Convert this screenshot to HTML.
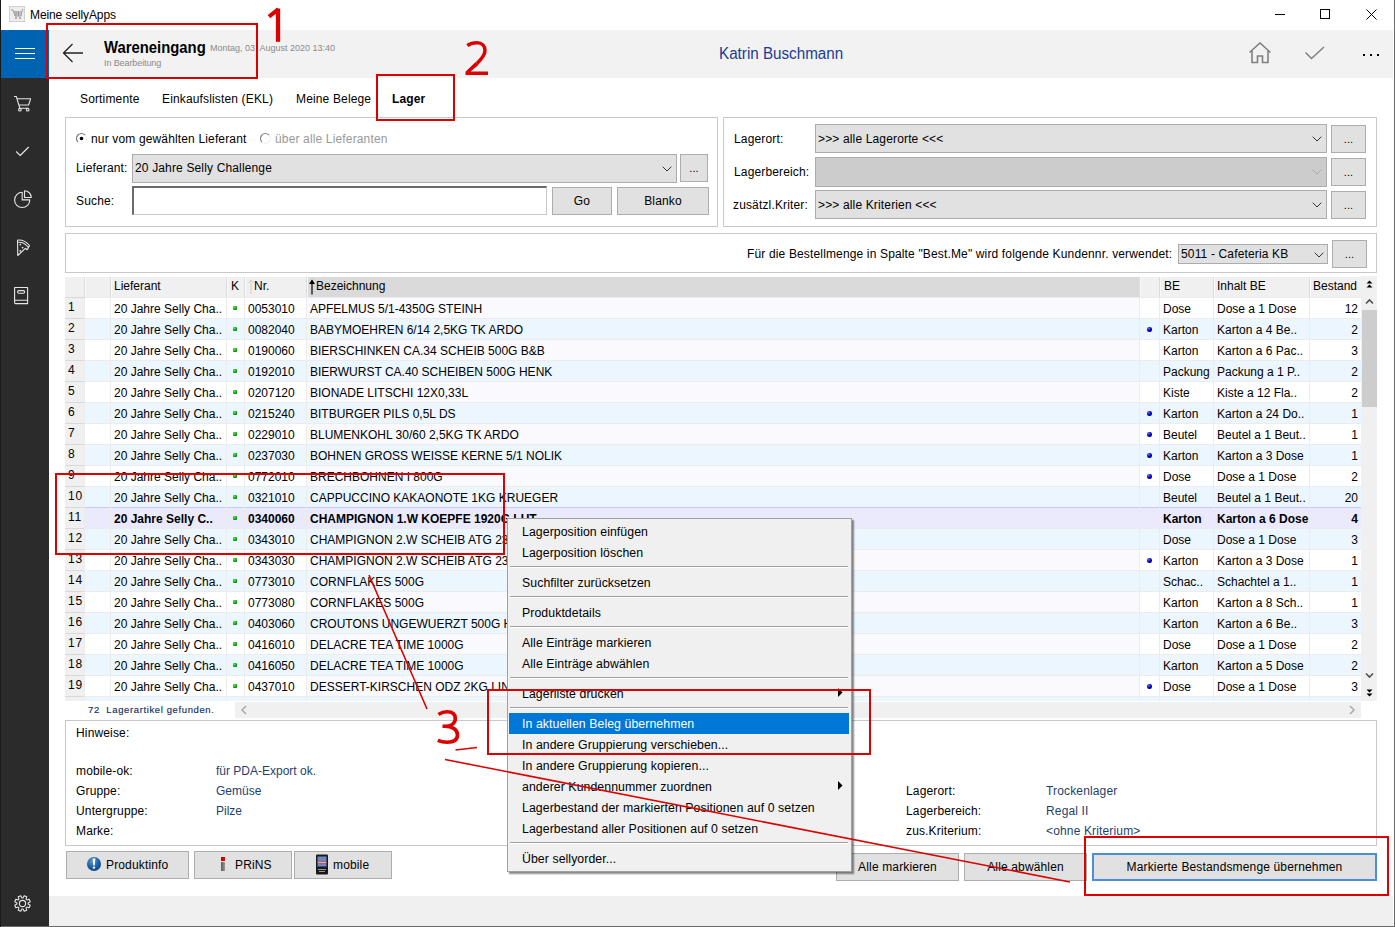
<!DOCTYPE html><html><head><meta charset="utf-8"><style>
*{box-sizing:border-box;margin:0;padding:0}
html,body{width:1395px;height:927px;overflow:hidden;background:#fff;font-family:"Liberation Sans",sans-serif;color:#000}
.ab{position:absolute}
.t{position:absolute;white-space:nowrap;font-size:12px;line-height:14px;letter-spacing:0.15px}
.g{letter-spacing:0}
.btn{position:absolute;background:#e1e1e1;border:1px solid #adadad}
.combo{position:absolute;background:#e1e1e1;border:1px solid #acacac}
.panel{position:absolute;border:1px solid #c8c8c8;background:#fff}
.sep{position:absolute;height:1px;background:#d7d7d7}

</style></head><body>
<div class="ab" style="left:9px;top:6px;width:16px;height:16px;background:#ededed;border:1px solid #d0d0d0"></div>
<svg class="ab" style="left:10px;top:8px" width="14" height="12" viewBox="0 0 14 12"><path d="M1 2 L3 2 L5 8 L11 8 L12 3 M4 4 L12 4 M5 6 L11 6 M6 3 L6 8 M8.5 3 L8.5 8 M12 3 L13 1" stroke="#999" stroke-width="1" fill="none"/><circle cx="6" cy="10" r="1" fill="#999"/><circle cx="10" cy="10" r="1" fill="#999"/></svg>
<div class="t" style="left:30px;top:8px;font-size:12px;color:#000;letter-spacing:-0.1px">Meine sellyApps</div>
<div class="ab" style="left:1275px;top:14px;width:10px;height:1px;background:#000"></div>
<div class="ab" style="left:1320px;top:9px;width:10px;height:10px;border:1px solid #000"></div>
<svg class="ab" style="left:1366px;top:9px" width="11" height="11" viewBox="0 0 11 11"><path d="M0.5 0.5 L10.5 10.5 M10.5 0.5 L0.5 10.5" stroke="#000" stroke-width="1"/></svg>
<div class="ab" style="left:1px;top:30px;width:48px;height:896px;background:#2b2b2b"></div>
<div class="ab" style="left:1px;top:30px;width:48px;height:48px;background:#0063b1"></div>
<div class="ab" style="left:15px;top:48px;width:20px;height:1px;background:#fff"></div>
<div class="ab" style="left:15px;top:53px;width:20px;height:1px;background:#fff"></div>
<div class="ab" style="left:15px;top:58px;width:20px;height:1px;background:#fff"></div>
<div class="ab" style="left:49px;top:30px;width:1344px;height:48px;background:#f2f2f2"></div>
<svg class="ab" style="left:62px;top:43px" width="23" height="20" viewBox="0 0 23 20"><path d="M1.5 10 L21 10 M10.5 1 L1.5 10 L10.5 19" stroke="#222" stroke-width="1.3" fill="none"/></svg>
<div class="t" style="left:104px;top:38px;font-size:16.5px;line-height:18px;font-weight:bold;letter-spacing:0;transform:scaleX(0.9);transform-origin:0 0">Wareneingang</div>
<div class="t" style="left:210px;top:43px;font-size:9px;line-height:11px;color:#8a8a8a;letter-spacing:0">Montag, 03. August 2020 13:40</div>
<div class="t" style="left:104px;top:58px;font-size:9px;line-height:11px;color:#8a8a8a;letter-spacing:-0.1px">In Bearbeitung</div>
<div class="t" style="left:719px;top:45px;font-size:16px;line-height:18px;color:#1a3b96;letter-spacing:0;transform:scaleX(0.95);transform-origin:0 0">Katrin Buschmann</div>
<svg class="ab" style="left:1248px;top:42px" width="24" height="22" viewBox="0 0 24 22"><path d="M1.5 10.5 L12 1 L22.5 10.5 M4 8.5 L4 20.5 L9.5 20.5 L9.5 14 L14.5 14 L14.5 20.5 L20 20.5 L20 8.5" stroke="#808080" stroke-width="1.6" fill="none"/></svg>
<svg class="ab" style="left:1305px;top:46px" width="20" height="14" viewBox="0 0 20 14"><path d="M0.5 6.5 L6.5 12.5 L19 1" stroke="#808080" stroke-width="1.5" fill="none"/></svg>
<div class="ab" style="left:1363px;top:54px;width:2px;height:2px;background:#000"></div>
<div class="ab" style="left:1370px;top:54px;width:2px;height:2px;background:#000"></div>
<div class="ab" style="left:1377px;top:54px;width:2px;height:2px;background:#000"></div>
<svg class="ab" style="left:0;top:0" width="49" height="927" viewBox="0 0 49 927" fill="none" stroke="#e6e6e6" stroke-width="1.1" stroke-linejoin="round"><path d="M14 96.5 L16.3 96.5 L19.8 108.2 L28.3 108.2 M17.2 98.8 L30.6 98.8 L28.6 105 L19.2 105"/><circle cx="19.9" cy="109.7" r="1.3"/><circle cx="27.7" cy="109.7" r="1.3"/><path d="M16.2 151.5 L20.2 155.5 L28.7 147"/><path d="M22.2 192.3 A7.6 7.6 0 1 0 29.8 199.9 L22.2 199.9 Z"/><path d="M24.5 190.8 L24.5 197.5 L31.2 197.5 A6.7 6.7 0 0 0 24.5 190.8 Z"/><path d="M17.5 240 L17.8 255.5 L25.3 248.3 M17.5 240 Q24.5 239.3 29.5 245.5 L27.3 249.8 L25.3 248.3 M18.3 242.2 Q24.5 242 28.2 247.2"/><path d="M14.6 287.5 L27.6 287.5 L27.6 303.6 L15.6 303.6 Q14.6 303.6 14.6 302.6 Z M14.6 300.3 L27.6 300.3"/><rect x="17.6" y="290.6" width="7" height="2.6" rx="1.2"/><path d="M28.07 904.04 L30.21 905.21 L29.16 907.74 L26.82 907.06 L26.06 907.82 L26.74 910.16 L24.21 911.21 L23.04 909.07 L21.96 909.07 L20.79 911.21 L18.26 910.16 L18.94 907.82 L18.18 907.06 L15.84 907.74 L14.79 905.21 L16.93 904.04 L16.93 902.96 L14.79 901.79 L15.84 899.26 L18.18 899.94 L18.94 899.18 L18.26 896.84 L20.79 895.79 L21.96 897.93 L23.04 897.93 L24.21 895.79 L26.74 896.84 L26.06 899.18 L26.82 899.94 L29.16 899.26 L30.21 901.79 L28.07 902.96 Z"/><circle cx="22.5" cy="903.5" r="3.1"/></svg>
<svg class="ab" style="left:0;top:0" width="49" height="927" viewBox="0 0 49 927" fill="#e6e6e6"><circle cx="20.3" cy="244.6" r="0.9"/><circle cx="22.6" cy="247.6" r="0.9"/><circle cx="20.3" cy="250.8" r="0.9"/></svg>
<div class="t" style="left:80px;top:92px">Sortimente</div>
<div class="t" style="left:162px;top:92px">Einkaufslisten (EKL)</div>
<div class="t" style="left:296px;top:92px">Meine Belege</div>
<div class="t" style="left:392px;top:92px;font-weight:bold">Lager</div>
<div class="panel" style="left:65px;top:117px;width:653px;height:110px"></div>
<svg class="ab" style="left:75px;top:132px" width="13" height="13" viewBox="0 0 13 13"><circle cx="6.5" cy="6.5" r="5" fill="#fff"/><path d="M2.96 10.04 A5 5 0 0 1 10.04 2.96" stroke="#7a7a7a" stroke-width="1.2" fill="none"/><path d="M10.04 2.96 A5 5 0 0 1 2.96 10.04" stroke="#f4f4f4" stroke-width="1.2" fill="none"/><circle cx="6.5" cy="6.5" r="1.8" fill="#000"/></svg>
<div class="t" style="left:91px;top:132px">nur vom gewählten Lieferant</div>
<svg class="ab" style="left:259px;top:132px" width="13" height="13" viewBox="0 0 13 13"><circle cx="6.5" cy="6.5" r="5" fill="#fff"/><path d="M2.96 10.04 A5 5 0 0 1 10.04 2.96" stroke="#8a8a8a" stroke-width="1.2" fill="none"/><path d="M10.04 2.96 A5 5 0 0 1 2.96 10.04" stroke="#f0f0f0" stroke-width="1.2" fill="none"/></svg>
<div class="t" style="left:275px;top:132px;color:#999">über alle Lieferanten</div>
<div class="t" style="left:76px;top:161px">Lieferant:</div>
<div class="combo" style="left:132px;top:154px;width:545px;height:29px"></div>
<div class="t" style="left:135px;top:161px">20 Jahre Selly Challenge</div>
<svg class="ab" style="left:662px;top:166px" width="10" height="6" viewBox="0 0 10 6"><path d="M0.7 0.7 L5 5 L9.3 0.7" stroke="#333" stroke-width="1" fill="none"/></svg>
<div class="btn" style="left:680px;top:154px;width:28px;height:28px"></div>
<div class="t" style="left:680px;top:161px;width:28px;text-align:center;font-size:11px">...</div>
<div class="t" style="left:76px;top:194px">Suche:</div>
<div class="ab" style="left:132px;top:186px;width:415px;height:29px;background:#fff;border:1px solid #c8c8c8;border-top:2px solid #6a6a6a;border-left:2px solid #6a6a6a"></div>
<div class="btn" style="left:552px;top:187px;width:60px;height:28px"></div>
<div class="t" style="left:552px;top:194px;width:60px;text-align:center">Go</div>
<div class="btn" style="left:617px;top:187px;width:92px;height:28px"></div>
<div class="t" style="left:617px;top:194px;width:92px;text-align:center">Blanko</div>
<div class="panel" style="left:723px;top:117px;width:654px;height:110px"></div>
<div class="t" style="left:734px;top:132px">Lagerort:</div>
<div class="t" style="left:734px;top:165px">Lagerbereich:</div>
<div class="t" style="left:733px;top:198px">zusätzl.Kriter:</div>
<div class="combo" style="left:815px;top:124px;width:512px;height:29px"></div>
<div class="t" style="left:818px;top:132px">&gt;&gt;&gt; alle Lagerorte &lt;&lt;&lt;</div>
<svg class="ab" style="left:1312px;top:136px" width="10" height="6" viewBox="0 0 10 6"><path d="M0.7 0.7 L5 5 L9.3 0.7" stroke="#333" stroke-width="1" fill="none"/></svg>
<div class="combo" style="left:815px;top:157px;width:512px;height:30px;background:#cccccc"></div>
<svg class="ab" style="left:1312px;top:169px" width="10" height="6" viewBox="0 0 10 6"><path d="M0.7 0.7 L5 5 L9.3 0.7" stroke="#aaa" stroke-width="1" fill="none"/></svg>
<div class="combo" style="left:815px;top:190px;width:512px;height:29px"></div>
<div class="t" style="left:818px;top:198px">&gt;&gt;&gt; alle Kriterien &lt;&lt;&lt;</div>
<svg class="ab" style="left:1312px;top:202px" width="10" height="6" viewBox="0 0 10 6"><path d="M0.7 0.7 L5 5 L9.3 0.7" stroke="#333" stroke-width="1" fill="none"/></svg>
<div class="btn" style="left:1331px;top:125px;width:35px;height:28px"></div>
<div class="t" style="left:1331px;top:132px;width:35px;text-align:center;font-size:11px">...</div>
<div class="btn" style="left:1331px;top:158px;width:35px;height:28px"></div>
<div class="t" style="left:1331px;top:165px;width:35px;text-align:center;font-size:11px">...</div>
<div class="btn" style="left:1331px;top:191px;width:35px;height:28px"></div>
<div class="t" style="left:1331px;top:198px;width:35px;text-align:center;font-size:11px">...</div>
<div class="panel" style="left:65px;top:233px;width:1312px;height:40px"></div>
<div class="t" style="left:747px;top:247px">Für die Bestellmenge in Spalte "Best.Me" wird folgende Kundennr. verwendet:</div>
<div class="combo" style="left:1178px;top:244px;width:150px;height:20px"></div>
<div class="t" style="left:1181px;top:247px">5011 - Cafeteria KB</div>
<svg class="ab" style="left:1314px;top:252px" width="10" height="6" viewBox="0 0 10 6"><path d="M0.7 0.7 L5 5 L9.3 0.7" stroke="#333" stroke-width="1" fill="none"/></svg>
<div class="btn" style="left:1332px;top:240px;width:35px;height:28px"></div>
<div class="t" style="left:1332px;top:247px;width:35px;text-align:center;font-size:11px">...</div>
<div class="ab" style="left:65px;top:276px;width:1312px;height:425px;overflow:hidden">
<div class="ab" style="left:0;top:1px;width:1296px;height:20px;background:#f0f0f0"></div>
<div class="ab" style="left:242px;top:1px;width:833px;height:20px;background:#dadada"></div>
<div class="ab" style="left:19px;top:1px;width:1px;height:20px;background:#dcdcdc"></div>
<div class="ab" style="left:20px;top:1px;width:1px;height:20px;background:#fafafa"></div>
<div class="ab" style="left:45px;top:1px;width:1px;height:20px;background:#dcdcdc"></div>
<div class="ab" style="left:46px;top:1px;width:1px;height:20px;background:#fafafa"></div>
<div class="ab" style="left:161px;top:1px;width:1px;height:20px;background:#dcdcdc"></div>
<div class="ab" style="left:162px;top:1px;width:1px;height:20px;background:#fafafa"></div>
<div class="ab" style="left:179px;top:1px;width:1px;height:20px;background:#dcdcdc"></div>
<div class="ab" style="left:180px;top:1px;width:1px;height:20px;background:#fafafa"></div>
<div class="ab" style="left:241px;top:1px;width:1px;height:20px;background:#dcdcdc"></div>
<div class="ab" style="left:242px;top:1px;width:1px;height:20px;background:#fafafa"></div>
<div class="ab" style="left:1074px;top:1px;width:1px;height:20px;background:#dcdcdc"></div>
<div class="ab" style="left:1075px;top:1px;width:1px;height:20px;background:#fafafa"></div>
<div class="ab" style="left:1094px;top:1px;width:1px;height:20px;background:#dcdcdc"></div>
<div class="ab" style="left:1095px;top:1px;width:1px;height:20px;background:#fafafa"></div>
<div class="ab" style="left:1148px;top:1px;width:1px;height:20px;background:#dcdcdc"></div>
<div class="ab" style="left:1149px;top:1px;width:1px;height:20px;background:#fafafa"></div>
<div class="ab" style="left:1244px;top:1px;width:1px;height:20px;background:#dcdcdc"></div>
<div class="ab" style="left:1245px;top:1px;width:1px;height:20px;background:#fafafa"></div>
<div class="ab" style="left:0;top:21px;width:1296px;height:1px;background:#dcdcdc"></div>
<div class="t g" style="left:49px;top:1px;line-height:19px;">Lieferant</div>
<div class="t g" style="left:166px;top:1px;line-height:19px;">K</div>
<div class="t g" style="left:189px;top:1px;line-height:19px;">Nr.</div>
<div class="t g" style="left:251px;top:1px;line-height:19px;">Bezeichnung</div>
<div class="t g" style="left:1099px;top:1px;line-height:19px;">BE</div>
<div class="t g" style="left:1152px;top:1px;line-height:19px;">Inhalt BE</div>
<div class="t g" style="left:1248px;top:1px;line-height:19px;">Bestand</div>
<svg class="ab" style="left:183px;top:3px" width="6" height="16" viewBox="0 0 6 16"><path d="M3 1 L3 15 M0.5 4 L3 1 L5.5 4" stroke="#d0d0d0" stroke-width="1" fill="none"/></svg>
<svg class="ab" style="left:244px;top:3px" width="6" height="16" viewBox="0 0 6 16"><path d="M3 1.5 L3 15.5" stroke="#000" stroke-width="1.2"/><path d="M0 5 L3 0.5 L6 5 Z" fill="#000"/></svg>
<div class="ab" style="left:1296px;top:0;width:16px;height:425px;background:#f0f0f0"></div>
<div class="ab" style="left:1297px;top:34px;width:15px;height:97px;background:#cdcdcd"></div>
<svg class="ab" style="left:1301px;top:4px" width="7" height="8" viewBox="0 0 7 8"><path d="M0.5 3.5 L3.5 0.5 L6.5 3.5 Z M0.5 7.5 L3.5 4.5 L6.5 7.5 Z" fill="#000"/></svg>
<svg class="ab" style="left:1300px;top:22px" width="9" height="7" viewBox="0 0 9 7"><path d="M1 5.5 L4.5 2 L8 5.5" stroke="#505050" stroke-width="1.6" fill="none"/></svg>
<svg class="ab" style="left:1300px;top:396px" width="9" height="7" viewBox="0 0 9 7"><path d="M1 1.5 L4.5 5 L8 1.5" stroke="#505050" stroke-width="1.6" fill="none"/></svg>
<svg class="ab" style="left:1301px;top:413px" width="7" height="8" viewBox="0 0 7 8"><path d="M0.5 0.5 L3.5 3.5 L6.5 0.5 Z M0.5 4.5 L3.5 7.5 L6.5 4.5 Z" fill="#000"/></svg>
<div class="ab" style="left:0;top:21px;width:20px;height:21px;background:#f0f0f0;border-top:1px solid #d9d9d9"></div>
<div class="ab" style="left:20px;top:21px;width:1276px;height:21px;background:#ffffff;border-top:1px solid #ececec"></div>
<div class="ab" style="left:242px;top:22px;width:833px;height:20px;background:#f9f9fe"></div>
<div class="t g" style="left:3px;top:22px;line-height:19px;letter-spacing:0.8px">1</div>
<div class="t g" style="left:49px;top:23px;line-height:21px;">20 Jahre Selly Cha..</div>
<div class="ab" style="left:168px;top:30px;width:4px;height:4px;background:radial-gradient(circle at 35% 30%,#50f050,#10b010 50%,#005a00);border-radius:1px"></div>
<div class="t g" style="left:183px;top:23px;line-height:21px;">0053010</div>
<div class="t g" style="left:245px;top:23px;line-height:21px;">APFELMUS 5/1-4350G STEINH</div>
<div class="t g" style="left:1098px;top:23px;line-height:21px;">Dose</div>
<div class="t g" style="left:1152px;top:23px;line-height:21px;">Dose a 1 Dose</div>
<div class="t g" style="left:1245px;top:23px;width:48px;text-align:right;line-height:21px;">12</div>
<div class="ab" style="left:0;top:42px;width:20px;height:21px;background:#f0f0f0;border-top:1px solid #d9d9d9"></div>
<div class="ab" style="left:20px;top:42px;width:1276px;height:21px;background:#ecf6fe;border-top:1px solid #ececec"></div>
<div class="ab" style="left:242px;top:43px;width:833px;height:20px;background:#ecf6fe"></div>
<div class="t g" style="left:3px;top:43px;line-height:19px;letter-spacing:0.8px">2</div>
<div class="t g" style="left:49px;top:44px;line-height:21px;">20 Jahre Selly Cha..</div>
<div class="ab" style="left:168px;top:51px;width:4px;height:4px;background:radial-gradient(circle at 35% 30%,#50f050,#10b010 50%,#005a00);border-radius:1px"></div>
<div class="t g" style="left:183px;top:44px;line-height:21px;">0082040</div>
<div class="t g" style="left:245px;top:44px;line-height:21px;">BABYMOEHREN 6/14 2,5KG TK ARDO</div>
<div class="ab" style="left:1082px;top:51px;width:5px;height:5px;background:radial-gradient(circle at 35% 30%,#7070f0,#0000c8 45%,#000060);border-radius:45%"></div>
<div class="t g" style="left:1098px;top:44px;line-height:21px;">Karton</div>
<div class="t g" style="left:1152px;top:44px;line-height:21px;">Karton a 4 Be..</div>
<div class="t g" style="left:1245px;top:44px;width:48px;text-align:right;line-height:21px;">2</div>
<div class="ab" style="left:0;top:63px;width:20px;height:21px;background:#f0f0f0;border-top:1px solid #d9d9d9"></div>
<div class="ab" style="left:20px;top:63px;width:1276px;height:21px;background:#ffffff;border-top:1px solid #ececec"></div>
<div class="ab" style="left:242px;top:64px;width:833px;height:20px;background:#f9f9fe"></div>
<div class="t g" style="left:3px;top:64px;line-height:19px;letter-spacing:0.8px">3</div>
<div class="t g" style="left:49px;top:65px;line-height:21px;">20 Jahre Selly Cha..</div>
<div class="ab" style="left:168px;top:72px;width:4px;height:4px;background:radial-gradient(circle at 35% 30%,#50f050,#10b010 50%,#005a00);border-radius:1px"></div>
<div class="t g" style="left:183px;top:65px;line-height:21px;">0190060</div>
<div class="t g" style="left:245px;top:65px;line-height:21px;">BIERSCHINKEN CA.34 SCHEIB 500G B&amp;B</div>
<div class="t g" style="left:1098px;top:65px;line-height:21px;">Karton</div>
<div class="t g" style="left:1152px;top:65px;line-height:21px;">Karton a 6 Pac..</div>
<div class="t g" style="left:1245px;top:65px;width:48px;text-align:right;line-height:21px;">3</div>
<div class="ab" style="left:0;top:84px;width:20px;height:21px;background:#f0f0f0;border-top:1px solid #d9d9d9"></div>
<div class="ab" style="left:20px;top:84px;width:1276px;height:21px;background:#ecf6fe;border-top:1px solid #ececec"></div>
<div class="ab" style="left:242px;top:85px;width:833px;height:20px;background:#ecf6fe"></div>
<div class="t g" style="left:3px;top:85px;line-height:19px;letter-spacing:0.8px">4</div>
<div class="t g" style="left:49px;top:86px;line-height:21px;">20 Jahre Selly Cha..</div>
<div class="ab" style="left:168px;top:93px;width:4px;height:4px;background:radial-gradient(circle at 35% 30%,#50f050,#10b010 50%,#005a00);border-radius:1px"></div>
<div class="t g" style="left:183px;top:86px;line-height:21px;">0192010</div>
<div class="t g" style="left:245px;top:86px;line-height:21px;">BIERWURST CA.40 SCHEIBEN 500G HENK</div>
<div class="t g" style="left:1098px;top:86px;line-height:21px;">Packung</div>
<div class="t g" style="left:1152px;top:86px;line-height:21px;">Packung a 1 P..</div>
<div class="t g" style="left:1245px;top:86px;width:48px;text-align:right;line-height:21px;">2</div>
<div class="ab" style="left:0;top:105px;width:20px;height:21px;background:#f0f0f0;border-top:1px solid #d9d9d9"></div>
<div class="ab" style="left:20px;top:105px;width:1276px;height:21px;background:#ffffff;border-top:1px solid #ececec"></div>
<div class="ab" style="left:242px;top:106px;width:833px;height:20px;background:#f9f9fe"></div>
<div class="t g" style="left:3px;top:106px;line-height:19px;letter-spacing:0.8px">5</div>
<div class="t g" style="left:49px;top:107px;line-height:21px;">20 Jahre Selly Cha..</div>
<div class="ab" style="left:168px;top:114px;width:4px;height:4px;background:radial-gradient(circle at 35% 30%,#50f050,#10b010 50%,#005a00);border-radius:1px"></div>
<div class="t g" style="left:183px;top:107px;line-height:21px;">0207120</div>
<div class="t g" style="left:245px;top:107px;line-height:21px;">BIONADE LITSCHI 12X0,33L</div>
<div class="t g" style="left:1098px;top:107px;line-height:21px;">Kiste</div>
<div class="t g" style="left:1152px;top:107px;line-height:21px;">Kiste a 12 Fla..</div>
<div class="t g" style="left:1245px;top:107px;width:48px;text-align:right;line-height:21px;">2</div>
<div class="ab" style="left:0;top:126px;width:20px;height:21px;background:#f0f0f0;border-top:1px solid #d9d9d9"></div>
<div class="ab" style="left:20px;top:126px;width:1276px;height:21px;background:#ecf6fe;border-top:1px solid #ececec"></div>
<div class="ab" style="left:242px;top:127px;width:833px;height:20px;background:#ecf6fe"></div>
<div class="t g" style="left:3px;top:127px;line-height:19px;letter-spacing:0.8px">6</div>
<div class="t g" style="left:49px;top:128px;line-height:21px;">20 Jahre Selly Cha..</div>
<div class="ab" style="left:168px;top:135px;width:4px;height:4px;background:radial-gradient(circle at 35% 30%,#50f050,#10b010 50%,#005a00);border-radius:1px"></div>
<div class="t g" style="left:183px;top:128px;line-height:21px;">0215240</div>
<div class="t g" style="left:245px;top:128px;line-height:21px;">BITBURGER PILS 0,5L DS</div>
<div class="ab" style="left:1082px;top:135px;width:5px;height:5px;background:radial-gradient(circle at 35% 30%,#7070f0,#0000c8 45%,#000060);border-radius:45%"></div>
<div class="t g" style="left:1098px;top:128px;line-height:21px;">Karton</div>
<div class="t g" style="left:1152px;top:128px;line-height:21px;">Karton a 24 Do..</div>
<div class="t g" style="left:1245px;top:128px;width:48px;text-align:right;line-height:21px;">1</div>
<div class="ab" style="left:0;top:147px;width:20px;height:21px;background:#f0f0f0;border-top:1px solid #d9d9d9"></div>
<div class="ab" style="left:20px;top:147px;width:1276px;height:21px;background:#ffffff;border-top:1px solid #ececec"></div>
<div class="ab" style="left:242px;top:148px;width:833px;height:20px;background:#f9f9fe"></div>
<div class="t g" style="left:3px;top:148px;line-height:19px;letter-spacing:0.8px">7</div>
<div class="t g" style="left:49px;top:149px;line-height:21px;">20 Jahre Selly Cha..</div>
<div class="ab" style="left:168px;top:156px;width:4px;height:4px;background:radial-gradient(circle at 35% 30%,#50f050,#10b010 50%,#005a00);border-radius:1px"></div>
<div class="t g" style="left:183px;top:149px;line-height:21px;">0229010</div>
<div class="t g" style="left:245px;top:149px;line-height:21px;">BLUMENKOHL 30/60 2,5KG TK ARDO</div>
<div class="ab" style="left:1082px;top:156px;width:5px;height:5px;background:radial-gradient(circle at 35% 30%,#7070f0,#0000c8 45%,#000060);border-radius:45%"></div>
<div class="t g" style="left:1098px;top:149px;line-height:21px;">Beutel</div>
<div class="t g" style="left:1152px;top:149px;line-height:21px;">Beutel a 1 Beut..</div>
<div class="t g" style="left:1245px;top:149px;width:48px;text-align:right;line-height:21px;">1</div>
<div class="ab" style="left:0;top:168px;width:20px;height:21px;background:#f0f0f0;border-top:1px solid #d9d9d9"></div>
<div class="ab" style="left:20px;top:168px;width:1276px;height:21px;background:#ecf6fe;border-top:1px solid #ececec"></div>
<div class="ab" style="left:242px;top:169px;width:833px;height:20px;background:#ecf6fe"></div>
<div class="t g" style="left:3px;top:169px;line-height:19px;letter-spacing:0.8px">8</div>
<div class="t g" style="left:49px;top:170px;line-height:21px;">20 Jahre Selly Cha..</div>
<div class="ab" style="left:168px;top:177px;width:4px;height:4px;background:radial-gradient(circle at 35% 30%,#50f050,#10b010 50%,#005a00);border-radius:1px"></div>
<div class="t g" style="left:183px;top:170px;line-height:21px;">0237030</div>
<div class="t g" style="left:245px;top:170px;line-height:21px;">BOHNEN GROSS WEISSE KERNE 5/1 NOLIK</div>
<div class="ab" style="left:1082px;top:177px;width:5px;height:5px;background:radial-gradient(circle at 35% 30%,#7070f0,#0000c8 45%,#000060);border-radius:45%"></div>
<div class="t g" style="left:1098px;top:170px;line-height:21px;">Karton</div>
<div class="t g" style="left:1152px;top:170px;line-height:21px;">Karton a 3 Dose</div>
<div class="t g" style="left:1245px;top:170px;width:48px;text-align:right;line-height:21px;">1</div>
<div class="ab" style="left:0;top:189px;width:20px;height:21px;background:#f0f0f0;border-top:1px solid #d9d9d9"></div>
<div class="ab" style="left:20px;top:189px;width:1276px;height:21px;background:#ffffff;border-top:1px solid #ececec"></div>
<div class="ab" style="left:242px;top:190px;width:833px;height:20px;background:#f9f9fe"></div>
<div class="t g" style="left:3px;top:190px;line-height:19px;letter-spacing:0.8px">9</div>
<div class="t g" style="left:49px;top:191px;line-height:21px;">20 Jahre Selly Cha..</div>
<div class="ab" style="left:168px;top:198px;width:4px;height:4px;background:radial-gradient(circle at 35% 30%,#50f050,#10b010 50%,#005a00);border-radius:1px"></div>
<div class="t g" style="left:183px;top:191px;line-height:21px;">0772010</div>
<div class="t g" style="left:245px;top:191px;line-height:21px;">BRECHBOHNEN I 800G</div>
<div class="ab" style="left:1082px;top:198px;width:5px;height:5px;background:radial-gradient(circle at 35% 30%,#7070f0,#0000c8 45%,#000060);border-radius:45%"></div>
<div class="t g" style="left:1098px;top:191px;line-height:21px;">Dose</div>
<div class="t g" style="left:1152px;top:191px;line-height:21px;">Dose a 1 Dose</div>
<div class="t g" style="left:1245px;top:191px;width:48px;text-align:right;line-height:21px;">2</div>
<div class="ab" style="left:0;top:210px;width:20px;height:21px;background:#f0f0f0;border-top:1px solid #d9d9d9"></div>
<div class="ab" style="left:20px;top:210px;width:1276px;height:21px;background:#ecf6fe;border-top:1px solid #ececec"></div>
<div class="ab" style="left:242px;top:211px;width:833px;height:20px;background:#ecf6fe"></div>
<div class="t g" style="left:3px;top:211px;line-height:19px;letter-spacing:0.8px">10</div>
<div class="t g" style="left:49px;top:212px;line-height:21px;">20 Jahre Selly Cha..</div>
<div class="ab" style="left:168px;top:219px;width:4px;height:4px;background:radial-gradient(circle at 35% 30%,#50f050,#10b010 50%,#005a00);border-radius:1px"></div>
<div class="t g" style="left:183px;top:212px;line-height:21px;">0321010</div>
<div class="t g" style="left:245px;top:212px;line-height:21px;">CAPPUCCINO KAKAONOTE 1KG KRUEGER</div>
<div class="t g" style="left:1098px;top:212px;line-height:21px;">Beutel</div>
<div class="t g" style="left:1152px;top:212px;line-height:21px;">Beutel a 1 Beut..</div>
<div class="t g" style="left:1245px;top:212px;width:48px;text-align:right;line-height:21px;">20</div>
<div class="ab" style="left:0;top:231px;width:20px;height:21px;background:#f0f0f0;border-top:1px solid #d9d9d9"></div>
<div class="ab" style="left:20px;top:231px;width:1276px;height:21px;background:#eaeafc;border-top:1px solid #ececec"></div>
<div class="ab" style="left:242px;top:232px;width:833px;height:20px;background:#eaeafc"></div>
<div class="ab" style="left:20px;top:231px;width:1276px;height:1px;background:#c8c8f6"></div>
<div class="ab" style="left:20px;top:252px;width:1276px;height:1px;background:#c8c8f6"></div>
<div class="t g" style="left:3px;top:232px;line-height:19px;letter-spacing:0.8px">11</div>
<div class="t g" style="left:49px;top:233px;line-height:21px;font-weight:bold;">20 Jahre Selly C..</div>
<div class="ab" style="left:168px;top:240px;width:4px;height:4px;background:radial-gradient(circle at 35% 30%,#50f050,#10b010 50%,#005a00);border-radius:1px"></div>
<div class="t g" style="left:183px;top:233px;line-height:21px;font-weight:bold;">0340060</div>
<div class="t g" style="left:245px;top:233px;line-height:21px;font-weight:bold;">CHAMPIGNON 1.W KOEPFE 1920G LUT</div>
<div class="t g" style="left:1098px;top:233px;line-height:21px;font-weight:bold;">Karton</div>
<div class="t g" style="left:1152px;top:233px;line-height:21px;font-weight:bold;">Karton a 6 Dose</div>
<div class="t g" style="left:1245px;top:233px;width:48px;text-align:right;line-height:21px;font-weight:bold;">4</div>
<div class="ab" style="left:0;top:252px;width:20px;height:21px;background:#f0f0f0;border-top:1px solid #d9d9d9"></div>
<div class="ab" style="left:20px;top:252px;width:1276px;height:21px;background:#ecf6fe;border-top:1px solid #ececec"></div>
<div class="ab" style="left:242px;top:253px;width:833px;height:20px;background:#ecf6fe"></div>
<div class="t g" style="left:3px;top:253px;line-height:19px;letter-spacing:0.8px">12</div>
<div class="t g" style="left:49px;top:254px;line-height:21px;">20 Jahre Selly Cha..</div>
<div class="ab" style="left:168px;top:261px;width:4px;height:4px;background:radial-gradient(circle at 35% 30%,#50f050,#10b010 50%,#005a00);border-radius:1px"></div>
<div class="t g" style="left:183px;top:254px;line-height:21px;">0343010</div>
<div class="t g" style="left:245px;top:254px;line-height:21px;">CHAMPIGNON 2.W SCHEIB ATG 230G</div>
<div class="t g" style="left:1098px;top:254px;line-height:21px;">Dose</div>
<div class="t g" style="left:1152px;top:254px;line-height:21px;">Dose a 1 Dose</div>
<div class="t g" style="left:1245px;top:254px;width:48px;text-align:right;line-height:21px;">3</div>
<div class="ab" style="left:0;top:273px;width:20px;height:21px;background:#f0f0f0;border-top:1px solid #d9d9d9"></div>
<div class="ab" style="left:20px;top:273px;width:1276px;height:21px;background:#ffffff;border-top:1px solid #ececec"></div>
<div class="ab" style="left:242px;top:274px;width:833px;height:20px;background:#f9f9fe"></div>
<div class="t g" style="left:3px;top:274px;line-height:19px;letter-spacing:0.8px">13</div>
<div class="t g" style="left:49px;top:275px;line-height:21px;">20 Jahre Selly Cha..</div>
<div class="ab" style="left:168px;top:282px;width:4px;height:4px;background:radial-gradient(circle at 35% 30%,#50f050,#10b010 50%,#005a00);border-radius:1px"></div>
<div class="t g" style="left:183px;top:275px;line-height:21px;">0343030</div>
<div class="t g" style="left:245px;top:275px;line-height:21px;">CHAMPIGNON 2.W SCHEIB ATG 230G</div>
<div class="ab" style="left:1082px;top:282px;width:5px;height:5px;background:radial-gradient(circle at 35% 30%,#7070f0,#0000c8 45%,#000060);border-radius:45%"></div>
<div class="t g" style="left:1098px;top:275px;line-height:21px;">Karton</div>
<div class="t g" style="left:1152px;top:275px;line-height:21px;">Karton a 3 Dose</div>
<div class="t g" style="left:1245px;top:275px;width:48px;text-align:right;line-height:21px;">1</div>
<div class="ab" style="left:0;top:294px;width:20px;height:21px;background:#f0f0f0;border-top:1px solid #d9d9d9"></div>
<div class="ab" style="left:20px;top:294px;width:1276px;height:21px;background:#ecf6fe;border-top:1px solid #ececec"></div>
<div class="ab" style="left:242px;top:295px;width:833px;height:20px;background:#ecf6fe"></div>
<div class="t g" style="left:3px;top:295px;line-height:19px;letter-spacing:0.8px">14</div>
<div class="t g" style="left:49px;top:296px;line-height:21px;">20 Jahre Selly Cha..</div>
<div class="ab" style="left:168px;top:303px;width:4px;height:4px;background:radial-gradient(circle at 35% 30%,#50f050,#10b010 50%,#005a00);border-radius:1px"></div>
<div class="t g" style="left:183px;top:296px;line-height:21px;">0773010</div>
<div class="t g" style="left:245px;top:296px;line-height:21px;">CORNFLAKES 500G</div>
<div class="t g" style="left:1098px;top:296px;line-height:21px;">Schac..</div>
<div class="t g" style="left:1152px;top:296px;line-height:21px;">Schachtel a 1..</div>
<div class="t g" style="left:1245px;top:296px;width:48px;text-align:right;line-height:21px;">1</div>
<div class="ab" style="left:0;top:315px;width:20px;height:21px;background:#f0f0f0;border-top:1px solid #d9d9d9"></div>
<div class="ab" style="left:20px;top:315px;width:1276px;height:21px;background:#ffffff;border-top:1px solid #ececec"></div>
<div class="ab" style="left:242px;top:316px;width:833px;height:20px;background:#f9f9fe"></div>
<div class="t g" style="left:3px;top:316px;line-height:19px;letter-spacing:0.8px">15</div>
<div class="t g" style="left:49px;top:317px;line-height:21px;">20 Jahre Selly Cha..</div>
<div class="ab" style="left:168px;top:324px;width:4px;height:4px;background:radial-gradient(circle at 35% 30%,#50f050,#10b010 50%,#005a00);border-radius:1px"></div>
<div class="t g" style="left:183px;top:317px;line-height:21px;">0773080</div>
<div class="t g" style="left:245px;top:317px;line-height:21px;">CORNFLAKES 500G</div>
<div class="t g" style="left:1098px;top:317px;line-height:21px;">Karton</div>
<div class="t g" style="left:1152px;top:317px;line-height:21px;">Karton a 8 Sch..</div>
<div class="t g" style="left:1245px;top:317px;width:48px;text-align:right;line-height:21px;">1</div>
<div class="ab" style="left:0;top:336px;width:20px;height:21px;background:#f0f0f0;border-top:1px solid #d9d9d9"></div>
<div class="ab" style="left:20px;top:336px;width:1276px;height:21px;background:#ecf6fe;border-top:1px solid #ececec"></div>
<div class="ab" style="left:242px;top:337px;width:833px;height:20px;background:#ecf6fe"></div>
<div class="t g" style="left:3px;top:337px;line-height:19px;letter-spacing:0.8px">16</div>
<div class="t g" style="left:49px;top:338px;line-height:21px;">20 Jahre Selly Cha..</div>
<div class="ab" style="left:168px;top:345px;width:4px;height:4px;background:radial-gradient(circle at 35% 30%,#50f050,#10b010 50%,#005a00);border-radius:1px"></div>
<div class="t g" style="left:183px;top:338px;line-height:21px;">0403060</div>
<div class="t g" style="left:245px;top:338px;line-height:21px;">CROUTONS UNGEWUERZT 500G HEN</div>
<div class="t g" style="left:1098px;top:338px;line-height:21px;">Karton</div>
<div class="t g" style="left:1152px;top:338px;line-height:21px;">Karton a 6 Be..</div>
<div class="t g" style="left:1245px;top:338px;width:48px;text-align:right;line-height:21px;">3</div>
<div class="ab" style="left:0;top:357px;width:20px;height:21px;background:#f0f0f0;border-top:1px solid #d9d9d9"></div>
<div class="ab" style="left:20px;top:357px;width:1276px;height:21px;background:#ffffff;border-top:1px solid #ececec"></div>
<div class="ab" style="left:242px;top:358px;width:833px;height:20px;background:#f9f9fe"></div>
<div class="t g" style="left:3px;top:358px;line-height:19px;letter-spacing:0.8px">17</div>
<div class="t g" style="left:49px;top:359px;line-height:21px;">20 Jahre Selly Cha..</div>
<div class="ab" style="left:168px;top:366px;width:4px;height:4px;background:radial-gradient(circle at 35% 30%,#50f050,#10b010 50%,#005a00);border-radius:1px"></div>
<div class="t g" style="left:183px;top:359px;line-height:21px;">0416010</div>
<div class="t g" style="left:245px;top:359px;line-height:21px;">DELACRE TEA TIME 1000G</div>
<div class="t g" style="left:1098px;top:359px;line-height:21px;">Dose</div>
<div class="t g" style="left:1152px;top:359px;line-height:21px;">Dose a 1 Dose</div>
<div class="t g" style="left:1245px;top:359px;width:48px;text-align:right;line-height:21px;">2</div>
<div class="ab" style="left:0;top:378px;width:20px;height:21px;background:#f0f0f0;border-top:1px solid #d9d9d9"></div>
<div class="ab" style="left:20px;top:378px;width:1276px;height:21px;background:#ecf6fe;border-top:1px solid #ececec"></div>
<div class="ab" style="left:242px;top:379px;width:833px;height:20px;background:#ecf6fe"></div>
<div class="t g" style="left:3px;top:379px;line-height:19px;letter-spacing:0.8px">18</div>
<div class="t g" style="left:49px;top:380px;line-height:21px;">20 Jahre Selly Cha..</div>
<div class="ab" style="left:168px;top:387px;width:4px;height:4px;background:radial-gradient(circle at 35% 30%,#50f050,#10b010 50%,#005a00);border-radius:1px"></div>
<div class="t g" style="left:183px;top:380px;line-height:21px;">0416050</div>
<div class="t g" style="left:245px;top:380px;line-height:21px;">DELACRE TEA TIME 1000G</div>
<div class="t g" style="left:1098px;top:380px;line-height:21px;">Karton</div>
<div class="t g" style="left:1152px;top:380px;line-height:21px;">Karton a 5 Dose</div>
<div class="t g" style="left:1245px;top:380px;width:48px;text-align:right;line-height:21px;">2</div>
<div class="ab" style="left:0;top:399px;width:20px;height:21px;background:#f0f0f0;border-top:1px solid #d9d9d9"></div>
<div class="ab" style="left:20px;top:399px;width:1276px;height:21px;background:#ffffff;border-top:1px solid #ececec"></div>
<div class="ab" style="left:242px;top:400px;width:833px;height:20px;background:#f9f9fe"></div>
<div class="t g" style="left:3px;top:400px;line-height:19px;letter-spacing:0.8px">19</div>
<div class="t g" style="left:49px;top:401px;line-height:21px;">20 Jahre Selly Cha..</div>
<div class="ab" style="left:168px;top:408px;width:4px;height:4px;background:radial-gradient(circle at 35% 30%,#50f050,#10b010 50%,#005a00);border-radius:1px"></div>
<div class="t g" style="left:183px;top:401px;line-height:21px;">0437010</div>
<div class="t g" style="left:245px;top:401px;line-height:21px;">DESSERT-KIRSCHEN ODZ 2KG LIN</div>
<div class="ab" style="left:1082px;top:408px;width:5px;height:5px;background:radial-gradient(circle at 35% 30%,#7070f0,#0000c8 45%,#000060);border-radius:45%"></div>
<div class="t g" style="left:1098px;top:401px;line-height:21px;">Dose</div>
<div class="t g" style="left:1152px;top:401px;line-height:21px;">Dose a 1 Dose</div>
<div class="t g" style="left:1245px;top:401px;width:48px;text-align:right;line-height:21px;">3</div>
<div class="ab" style="left:0;top:420px;width:20px;height:21px;background:#f0f0f0;border-top:1px solid #d9d9d9"></div>
<div class="ab" style="left:20px;top:420px;width:1276px;height:21px;background:#ecf6fe;border-top:1px solid #ececec"></div>
<div class="ab" style="left:242px;top:421px;width:833px;height:20px;background:#ecf6fe"></div>
<div class="t g" style="left:3px;top:421px;line-height:19px;letter-spacing:0.8px">20</div>
<div class="t g" style="left:49px;top:422px;line-height:21px;">20 Jahre Selly Cha..</div>
<div class="ab" style="left:168px;top:429px;width:4px;height:4px;background:radial-gradient(circle at 35% 30%,#50f050,#10b010 50%,#005a00);border-radius:1px"></div>
<div class="t g" style="left:183px;top:422px;line-height:21px;">0440010</div>
<div class="t g" style="left:245px;top:422px;line-height:21px;">DESSERT</div>
<div class="t g" style="left:1098px;top:422px;line-height:21px;">Dose</div>
<div class="t g" style="left:1152px;top:422px;line-height:21px;">Dose</div>
<div class="t g" style="left:1245px;top:422px;width:48px;text-align:right;line-height:21px;">1</div>
<div class="ab" style="left:19px;top:22px;width:1px;height:404px;background:#ececec"></div>
<div class="ab" style="left:45px;top:22px;width:1px;height:404px;background:#ececec"></div>
<div class="ab" style="left:161px;top:22px;width:1px;height:404px;background:#ececec"></div>
<div class="ab" style="left:179px;top:22px;width:1px;height:404px;background:#ececec"></div>
<div class="ab" style="left:241px;top:22px;width:1px;height:404px;background:#ececec"></div>
<div class="ab" style="left:1074px;top:22px;width:1px;height:404px;background:#ececec"></div>
<div class="ab" style="left:1094px;top:22px;width:1px;height:404px;background:#ececec"></div>
<div class="ab" style="left:1148px;top:22px;width:1px;height:404px;background:#ececec"></div>
<div class="ab" style="left:1244px;top:22px;width:1px;height:404px;background:#ececec"></div>
</div>
<div class="ab" style="left:65px;top:701px;width:1296px;height:17px;background:#fff"></div>
<div class="t" style="left:88px;top:704px;font-size:9.5px;line-height:12px;color:#14305e;letter-spacing:0.62px;-webkit-text-stroke:0.15px #14305e">72&nbsp; Lagerartikel gefunden.</div>
<div class="ab" style="left:235px;top:702px;width:1126px;height:16px;background:#f0f0f0"></div>
<svg class="ab" style="left:240px;top:705px" width="7" height="10" viewBox="0 0 7 10"><path d="M6 1 L2 5 L6 9" stroke="#aaa" stroke-width="1.5" fill="none"/></svg>
<svg class="ab" style="left:1349px;top:705px" width="7" height="10" viewBox="0 0 7 10"><path d="M1 1 L5 5 L1 9" stroke="#aaa" stroke-width="1.5" fill="none"/></svg>
<div class="panel" style="left:65px;top:720px;width:1312px;height:126px"></div>
<div class="t" style="left:76px;top:726px">Hinweise:</div>
<div class="t" style="left:76px;top:764px">mobile-ok:</div>
<div class="t g" style="left:216px;top:764px;color:#1e3f6e">für PDA-Export ok.</div>
<div class="t" style="left:76px;top:784px">Gruppe:</div>
<div class="t g" style="left:216px;top:784px;color:#1e3f6e">Gemüse</div>
<div class="t" style="left:76px;top:804px">Untergruppe:</div>
<div class="t g" style="left:216px;top:804px;color:#1e3f6e">Pilze</div>
<div class="t" style="left:76px;top:824px">Marke:</div>
<div class="t g" style="left:216px;top:824px;color:#1e3f6e"></div>
<div class="t" style="left:906px;top:784px">Lagerort:</div>
<div class="t" style="left:1046px;top:784px;color:#1e3f6e">Trockenlager</div>
<div class="t" style="left:906px;top:804px">Lagerbereich:</div>
<div class="t" style="left:1046px;top:804px;color:#1e3f6e">Regal II</div>
<div class="t" style="left:906px;top:824px">zus.Kriterium:</div>
<div class="t" style="left:1046px;top:824px;color:#1e3f6e">&lt;ohne Kriterium&gt;</div>
<div class="btn" style="left:66px;top:851px;width:123px;height:28px"></div>
<svg class="ab" style="left:86px;top:856px" width="16" height="16" viewBox="0 0 16 16"><defs><radialGradient id="g1" cx="0.4" cy="0.3" r="0.75"><stop offset="0" stop-color="#5a9ad6"/><stop offset="0.6" stop-color="#1f5f9f"/><stop offset="1" stop-color="#0b4585"/></radialGradient></defs><circle cx="8" cy="8" r="7" fill="url(#g1)"/><path d="M6.6 2.6 L9.4 2.6 L8.7 9.4 L7.3 9.4 Z" fill="#fff"/><circle cx="8" cy="11.6" r="1.2" fill="#fff"/></svg>
<div class="t" style="left:106px;top:858px">Produktinfo</div>
<div class="btn" style="left:194px;top:851px;width:98px;height:28px"></div>
<div class="ab" style="left:221px;top:857px;width:4px;height:4px;background:#d00000"></div>
<div class="ab" style="left:221px;top:862px;width:4px;height:9px;background:linear-gradient(90deg,#5a5a5a,#9a9a9a)"></div>
<div class="t" style="left:235px;top:858px">PRiNS</div>
<div class="btn" style="left:294px;top:851px;width:98px;height:28px"></div>
<svg class="ab" style="left:315px;top:854px" width="14" height="21" viewBox="0 0 14 21"><rect x="1" y="0.5" width="12" height="20" rx="1" fill="#1a1a1a"/><rect x="2.5" y="2.5" width="9" height="10" fill="#6f86c0"/><rect x="2.5" y="7.5" width="9" height="2" fill="#c04040"/><path d="M3 8.5 L11 8.5" stroke="#fff" stroke-width="0.6"/><path d="M3 15.5 L11 15.5 M4 17.5 L10 17.5" stroke="#bbb" stroke-width="0.8"/></svg>
<div class="t" style="left:333px;top:858px">mobile</div>
<div class="btn" style="left:836px;top:853px;width:123px;height:28px;"></div>
<div class="t" style="left:836px;top:860px;width:123px;text-align:center">Alle markieren</div>
<div class="btn" style="left:964px;top:853px;width:123px;height:28px;"></div>
<div class="t" style="left:964px;top:860px;width:123px;text-align:center">Alle abwählen</div>
<div class="btn" style="left:1092px;top:853px;width:285px;height:28px;border:2px solid #4a8fd8"></div>
<div class="t" style="left:1092px;top:860px;width:285px;text-align:center">Markierte Bestandsmenge übernehmen</div>
<div class="ab" style="left:49px;top:896px;width:1344px;height:30px;background:#f0f0f0"></div>
<div class="ab" style="left:507px;top:518px;width:345px;height:354px;background:#f0f0f0;border:1px solid #a0a0a0;box-shadow:2px 2px 1.5px rgba(0,0,0,0.45)"></div>
<div class="ab" style="left:509px;top:713px;width:340px;height:21px;background:#0078d7"></div>
<div class="ab" style="left:510px;top:566px;width:338px;height:1px;background:#a0a0a0"></div>
<div class="ab" style="left:510px;top:567px;width:338px;height:1px;background:#fff"></div>
<div class="ab" style="left:510px;top:596px;width:338px;height:1px;background:#a0a0a0"></div>
<div class="ab" style="left:510px;top:597px;width:338px;height:1px;background:#fff"></div>
<div class="ab" style="left:510px;top:626px;width:338px;height:1px;background:#a0a0a0"></div>
<div class="ab" style="left:510px;top:627px;width:338px;height:1px;background:#fff"></div>
<div class="ab" style="left:510px;top:677px;width:338px;height:1px;background:#a0a0a0"></div>
<div class="ab" style="left:510px;top:678px;width:338px;height:1px;background:#fff"></div>
<div class="ab" style="left:510px;top:707px;width:338px;height:1px;background:#a0a0a0"></div>
<div class="ab" style="left:510px;top:708px;width:338px;height:1px;background:#fff"></div>
<div class="ab" style="left:510px;top:842px;width:338px;height:1px;background:#a0a0a0"></div>
<div class="ab" style="left:510px;top:843px;width:338px;height:1px;background:#fff"></div>
<div class="t" style="left:522px;top:525px;font-size:12.3px;letter-spacing:0.07px;line-height:15px;color:#000">Lagerposition einfügen</div>
<div class="t" style="left:522px;top:546px;font-size:12.3px;letter-spacing:0.07px;line-height:15px;color:#000">Lagerposition löschen</div>
<div class="t" style="left:522px;top:576px;font-size:12.3px;letter-spacing:0.07px;line-height:15px;color:#000">Suchfilter zurücksetzen</div>
<div class="t" style="left:522px;top:606px;font-size:12.3px;letter-spacing:0.07px;line-height:15px;color:#000">Produktdetails</div>
<div class="t" style="left:522px;top:636px;font-size:12.3px;letter-spacing:0.07px;line-height:15px;color:#000">Alle Einträge markieren</div>
<div class="t" style="left:522px;top:657px;font-size:12.3px;letter-spacing:0.07px;line-height:15px;color:#000">Alle Einträge abwählen</div>
<div class="t" style="left:522px;top:687px;font-size:12.3px;letter-spacing:0.07px;line-height:15px;color:#000">Lagerliste drucken</div>
<div class="t" style="left:522px;top:717px;font-size:12.3px;letter-spacing:0.07px;line-height:15px;color:#fff">In aktuellen Beleg übernehmen</div>
<div class="t" style="left:522px;top:738px;font-size:12.3px;letter-spacing:0.07px;line-height:15px;color:#000">In andere Gruppierung verschieben...</div>
<div class="t" style="left:522px;top:759px;font-size:12.3px;letter-spacing:0.07px;line-height:15px;color:#000">In andere Gruppierung kopieren...</div>
<div class="t" style="left:522px;top:780px;font-size:12.3px;letter-spacing:0.07px;line-height:15px;color:#000">anderer Kundennummer zuordnen</div>
<div class="t" style="left:522px;top:801px;font-size:12.3px;letter-spacing:0.07px;line-height:15px;color:#000">Lagerbestand der markierten Positionen auf 0 setzen</div>
<div class="t" style="left:522px;top:822px;font-size:12.3px;letter-spacing:0.07px;line-height:15px;color:#000">Lagerbestand aller Positionen auf 0 setzen</div>
<div class="t" style="left:522px;top:852px;font-size:12.3px;letter-spacing:0.07px;line-height:15px;color:#000">Über sellyorder...</div>
<svg class="ab" style="left:838px;top:688px" width="5" height="9" viewBox="0 0 5 9"><path d="M0 0 L4.5 4.5 L0 9 Z" fill="#000"/></svg>
<svg class="ab" style="left:838px;top:781px" width="5" height="9" viewBox="0 0 5 9"><path d="M0 0 L4.5 4.5 L0 9 Z" fill="#000"/></svg>
<div class="ab" style="left:46px;top:23px;width:212px;height:56px;border:2px solid #dc0000"></div>
<div class="ab" style="left:55px;top:473px;width:450px;height:82px;border:2px solid #dc0000"></div>
<div class="ab" style="left:376px;top:74px;width:79px;height:47px;border:2px solid #dc0000"></div>
<div class="ab" style="left:487px;top:689px;width:384px;height:66px;border:2px solid #dc0000"></div>
<div class="ab" style="left:1084px;top:836px;width:305px;height:60px;border:2px solid #dc0000"></div>
<svg class="ab" style="left:0;top:0" width="1395" height="927" viewBox="0 0 1395 927"><path d="M369 575 L427 709 M455.5 750 L477 747.5 M445 759.5 L1070 882" stroke="#dc0000" stroke-width="1.6" fill="none"/></svg>
<svg class="ab" style="left:0;top:0" width="1395" height="927" viewBox="0 0 1395 927" fill="none" stroke="#dc0000"><path d="M278 8.5 L278 41.8" stroke-width="4.3"/><path d="M269 16.6 L278.5 9.2" stroke-width="4"/><path d="M467.3 45.5 C470.5 43.3 474 42.8 477 42.8 C482 42.8 485 46 485 50.5 C485 55 482 58.5 477 63.5" stroke-width="3.5"/><path d="M475.6 62.1 L465.5 71.8 L465.5 75 L488 75 L488 71.6 L470.6 71.6 L478.4 64.9 Z" fill="#dc0000" stroke="none"/><path d="M438.5 714.5 C441 712.8 444 711.8 447 711.8 C452.5 711.8 455.3 714.5 455.3 718.5 C455.3 723.5 451 726.3 445 726.3 L442.5 726.3 M445 726.3 C452 726.3 457.5 729.5 457.5 735 C457.5 740 453 742.2 447 742.2 C443.5 742.2 440.5 741.5 437.8 740.3" stroke-width="3.6"/></svg>
<div class="ab" style="left:0;top:0;width:1px;height:927px;background:#1a1a1a"></div>
<div class="ab" style="left:1394px;top:0;width:1px;height:927px;background:#6b6b6b"></div>
<div class="ab" style="left:1px;top:926px;width:1394px;height:1px;background:#6b6b6b"></div>
</body></html>
